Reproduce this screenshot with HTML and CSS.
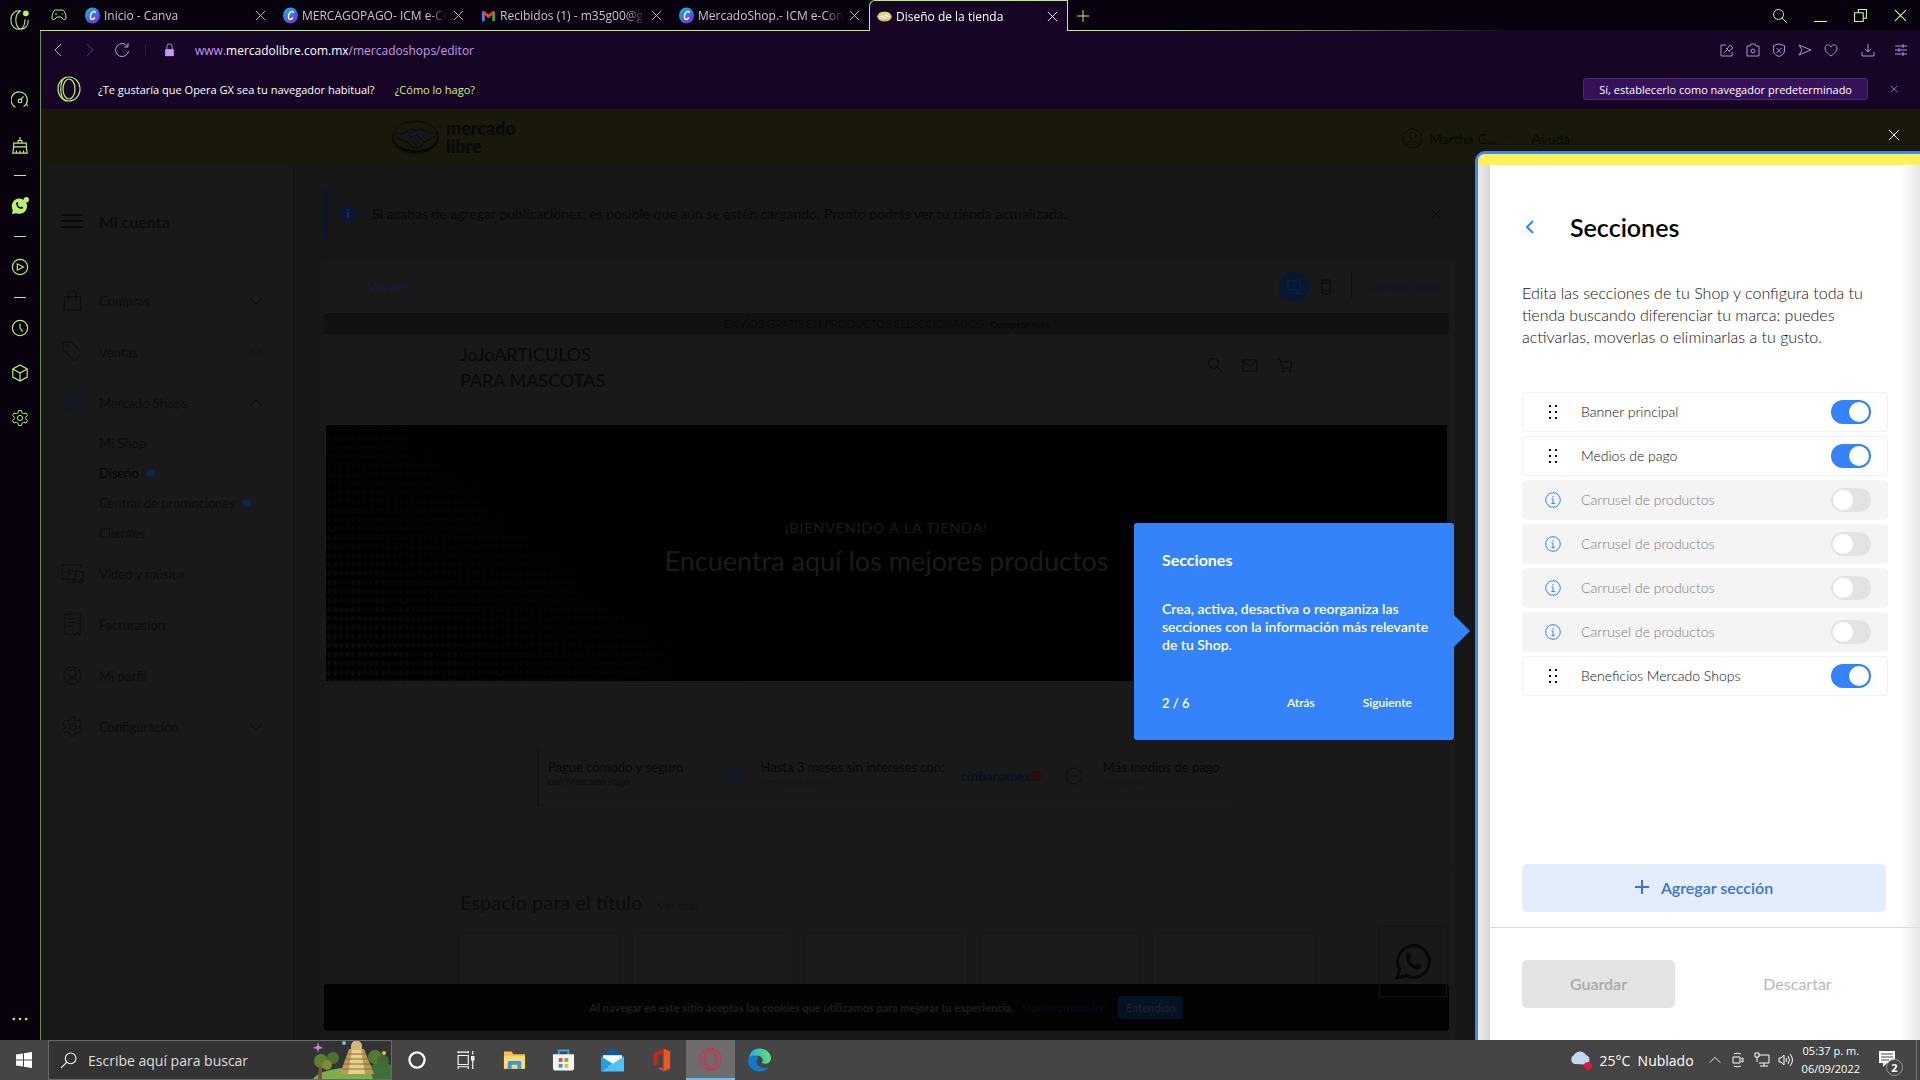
FILE: index.html
```html
<!DOCTYPE html>
<html lang="es">

<head>
    <meta charset="UTF-8">
    <meta name="viewport" content="width=device-width, initial-scale=1.0">
    <title>Diseño de la tienda</title>
    <link rel="stylesheet" href="styles.css">
</head>

<body>
    <!-- shared icons -->
    <svg class="sprite" aria-hidden="true">
        <symbol id="i-close" viewBox="0 0 12 12"><path d="M1 1l10 10M11 1L1 11"/></symbol>
        <symbol id="i-down" viewBox="0 0 16 16"><path d="M2 5l6 6 6-6"/></symbol>
        <symbol id="i-up" viewBox="0 0 16 16"><path d="M2 11l6-6 6 6"/></symbol>
        <symbol id="i-left" viewBox="0 0 16 16"><path d="M11 2L5 8l6 6"/></symbol>
        <symbol id="i-right" viewBox="0 0 16 16"><path d="M5 2l6 6-6 6"/></symbol>
        <symbol id="i-search" viewBox="0 0 16 16"><circle cx="6.500" cy="6.500" r="5"/><path d="M10 10l5 5"/></symbol>
        <symbol id="i-gear" viewBox="0 0 24 24"><circle cx="12" cy="12" r="3.500"/><path d="M10 2h4l.6 3 2.400 1.300 2.900-1 2 3.500L19.700 11v2l2.200 2.200-2 3.500-2.900-1-2.400 1.300-.6 3h-4l-.6-3L7 17.700l-2.900 1-2-3.500L4.300 13v-2L2.100 8.800l2-3.500 2.900 1L9.400 5z"/></symbol>
        <symbol id="i-info" viewBox="0 0 16 16"><circle cx="8" cy="8" r="7.300"/><path d="M6.500 7H8v4.500M6.300 11.500h3.500M8 4v1.500"/></symbol>
        <symbol id="i-grip" viewBox="0 0 8 14"><path d="M0 0h2v2H0zM6 0h2v2H6zM0 6h2v2H0zM6 6h2v2H6zM0 12h2v2H0zM6 12h2v2H6z"/></symbol>
        <symbol id="i-phone" viewBox="0 0 24 24"><path d="M2 22l1.500-5.500A10 10 0 1 1 7.500 20.500z"/><path class="solid" d="M7.500 7c1-1.500 2-1 2.300 0l.7 1.800c.2.600-.9 1.400-.6 1.900.8 1.500 1.900 2.500 3.400 3.200.6.300 1.300-1.200 1.900-.9l2 1c.7.500-.2 2.500-2 2.800C11.500 17.300 6.500 12 7.500 7z"/></symbol>
        <symbol id="i-canva" viewBox="0 0 16 18"><defs><linearGradient id="cv" x1="0" y1="0" x2=".7" y2="1"><stop offset="0" stop-color="#12c8cf"/><stop offset=".5" stop-color="#3a7be0"/><stop offset="1" stop-color="#7d2ae8"/></linearGradient></defs><ellipse cx="8" cy="9" rx="8" ry="8.500" fill="url(#cv)" stroke="none"/><path d="M10.800 6.500c.4-2-1.300-2.400-2.700-1.300-2.200 1.700-3 5.500-1.800 7.300 1 1.300 3 .6 4.300-1.500" stroke="#fff" stroke-width="1.500"/></symbol>
        <symbol id="i-hands" viewBox="0 0 50 34"><ellipse class="ring" cx="25" cy="18" rx="24" ry="16"/><ellipse class="plate" cx="25" cy="16" rx="23" ry="15"/><path class="hands" d="M3 13c7 2 10 0 15-3 3-1 5-1 7 0 4-2 7-1 10 1 4 2 7 3 12 1-1 5-6 7-11 9-3 4-7 8-12 7-4-1-6-5-9-7-5-1-10-3-12-8z"/><path d="M25 10l-7 5c2 3 5 2 8 0l10 8M31 25l-5-5M27 27l-4-4"/></symbol>
    </svg>

    <div class="desktop">
        <aside class="gx-bar">
            <div class="gx-logo">
                <svg viewBox="0 0 24 24"><path d="M13 1C6 0 1 5 1 12s5 12 11 11c6 0 10-4 10-11M13 1C9 3 7 7 7 12s2 9 5 11c4-1 6-5 6-12"/><circle class="solid" cx="19" cy="4" r="3.500"/></svg>
            </div>
            <button aria-label="Control GX"><svg viewBox="0 0 20 20"><path d="M5 18a9 9 0 1 1 9-.5M18 9v4M18 15v2"/><circle cx="10" cy="11" r="2"/><path d="M11 9l3-3"/></svg></button>
            <button aria-label="Limpiador"><svg viewBox="0 0 20 20"><path d="M3 8h14v4H3zM8 8V5h4v3M10 5V1M3 12l-1 7h16l-1-7M6 19v-3M10 19v-3M14 19v-3"/></svg></button>
            <span class="dash"></span>
            <button aria-label="WhatsApp"><svg viewBox="0 0 20 20"><path class="solid" d="M1 19l1-4.500A8.500 8.500 0 1 1 6 18z"/><circle class="solid" cx="17" cy="3" r="3"/><path class="hole" d="M6 6c1-1 1.500-.5 2 1 .3 1-.6 1-.3 1.800.6 1.300 1.400 2 2.600 2.500.8.300 1-.9 1.700-.6 1.500.6 2 1.200 1 2C10 14.500 4.500 10 6 6z"/></svg></button>
            <span class="dash"></span>
            <button aria-label="Reproductor"><svg viewBox="0 0 20 20"><circle cx="10" cy="10" r="8.500"/><path d="M7 6.500v7l7-3.500z"/></svg></button>
            <span class="dash"></span>
            <button aria-label="Historial"><svg viewBox="0 0 20 20"><circle cx="10" cy="10" r="8.500"/><path d="M10 5v5l3 4"/></svg></button>
            <button aria-label="Extensiones"><svg viewBox="0 0 20 20"><path d="M10 1l8 4.500v9L10 19l-8-4.500v-9zM2 5.500L10 10l8-4.500M10 10v9"/></svg></button>
            <button aria-label="Ajustes"><svg><use href="#i-gear"/></svg></button>
            <button class="more" aria-label="Más"><svg viewBox="0 0 18 4"><circle class="solid" cx="2" cy="2" r="1.500"/><circle class="solid" cx="9" cy="2" r="1.500"/><circle class="solid" cx="16" cy="2" r="1.500"/></svg></button>
        </aside>

        <div class="browser">
            <div class="tabs">
                <span class="gamepad"><svg viewBox="0 0 16 14"><path d="M4 2h8c2 1 3 5 3 8 0 2-2 2-3 1l-2-2H6l-2 2c-1 1-3 1-3-1 0-3 1-7 3-8z"/><path d="M4 6h2M11 6h1"/></svg></span>
                <div class="tab"><svg><use href="#i-canva"/></svg><span>Inicio - Canva</span><button aria-label="Cerrar"><svg><use href="#i-close"/></svg></button></div>
                <div class="tab"><svg><use href="#i-canva"/></svg><span>MERCAGOPAGO- ICM e-Commerce</span><button aria-label="Cerrar"><svg><use href="#i-close"/></svg></button></div>
                <div class="tab"><svg viewBox="0 0 16 18"><path d="M1 4v11h3V7z" fill="#4285f4" stroke="none"/><path d="M15 4v11h-3V7z" fill="#34a853" stroke="none"/><path d="M2 5l6 5 6-5" stroke="#ea4335" stroke-width="3"/></svg><span>Recibidos (1) - m35g00@gmail.com</span><button aria-label="Cerrar"><svg><use href="#i-close"/></svg></button></div>
                <div class="tab"><svg><use href="#i-canva"/></svg><span>MercadoShop.- ICM e-Commerce</span><button aria-label="Cerrar"><svg><use href="#i-close"/></svg></button></div>
                <div class="tab active"><svg class="ml-icon"><use href="#i-hands"/></svg><span>Diseño de la tienda</span><button aria-label="Cerrar"><svg><use href="#i-close"/></svg></button></div>
                <button class="new-tab" aria-label="Nueva pestaña"><svg viewBox="0 0 12 12"><path d="M6 0v12M0 6h12"/></svg></button>
                <div class="window-buttons">
                    <button aria-label="Buscar"><svg class="find"><use href="#i-search"/></svg></button>
                    <button aria-label="Minimizar"><svg viewBox="0 0 12 12"><path d="M0 11.500h12"/></svg></button>
                    <button aria-label="Restaurar"><svg viewBox="0 0 12 12"><path d="M.5 3.500h8v8h-8zM4 3.500v-3h7.500v8H8.500"/></svg></button>
                    <button aria-label="Cerrar ventana"><svg><use href="#i-close"/></svg></button>
                </div>
            </div>

            <div class="address">
                <button aria-label="Atrás"><svg><use href="#i-left"/></svg></button>
                <button class="off" aria-label="Adelante"><svg><use href="#i-right"/></svg></button>
                <button aria-label="Recargar"><svg viewBox="0 0 16 16"><path d="M13.500 4.500A6.500 6.500 0 1 0 14.500 9M14 1v4h-4"/></svg></button>
                <span class="sep"></span>
                <svg class="lock" viewBox="0 0 12 16"><path class="solid" d="M1 7h10v8H1z"/><path d="M3 7V4a3 3 0 0 1 6 0v3"/></svg>
                <div class="url">www.<b>mercadolibre.com.mx</b>/mercadoshops/editor</div>
                <div class="tools">
                    <button aria-label="Fijar"><svg viewBox="0 0 14 14"><path d="M6 2H1v11h11V9M4 10l3-3M6 5l4 4M7 6l3-4 3 3-4 3"/></svg></button>
                    <button aria-label="Captura"><svg viewBox="0 0 14 14"><path d="M1 3h3l1-2h4l1 2h3v10H1z"/><circle cx="7" cy="8" r="2"/></svg></button>
                    <button aria-label="Bloqueador"><svg viewBox="0 0 14 14"><path d="M7 1l5.500 1.500V8c0 3-3 4.500-5.500 5.500C4.500 12.500 1.500 11 1.500 8V2.500zM4.500 5l5 5M9.500 5l-5 5"/></svg></button>
                    <button aria-label="Enviar"><svg viewBox="0 0 14 14"><path d="M1 2l12 5-12 5 3-5z"/></svg></button>
                    <button class="heart" aria-label="Favoritos"><svg viewBox="0 0 14 14"><path d="M7 13C3 10 1 8 1 5c0-4 5-4 6-1 1-3 6-3 6 1 0 3-2 5-6 8z"/></svg></button>
                    <button class="wide" aria-label="Descargas"><svg viewBox="0 0 14 14"><path d="M7 1v8M4 6l3 3 3-3M1 9v4h12V9"/></svg></button>
                    <button class="wide" aria-label="Configuración rápida"><svg viewBox="0 0 14 14"><path d="M1 3h12M1 7h12M1 11h12M9 1v4M5 5v4M9 9v4"/></svg></button>
                </div>
            </div>

            <div class="ask">
                <svg class="opera" viewBox="0 0 24 26"><ellipse cx="12" cy="13" rx="11" ry="12"/><ellipse cx="12" cy="13" rx="6" ry="10"/><path d="M9 1c-7 3-7 21 0 24"/></svg>
                <span>¿Te gustaría que Opera GX sea tu navegador habitual?</span>
                <a href="#">¿Cómo lo hago?</a>
                <button class="default-btn">Sí, establecerlo como navegador predeterminado</button>
                <button class="ask-close" aria-label="Cerrar aviso"><svg><use href="#i-close"/></svg></button>
            </div>

            <div class="site">
                <header class="site-header">
                    <a class="logo" href="#"><svg><use href="#i-hands"/></svg><span>mercado<br>libre</span></a>
                    <div class="account">
                        <svg class="avatar" viewBox="0 0 22 22"><circle cx="11" cy="11" r="10"/><circle cx="11" cy="8" r="3.500"/><path d="M4 18c2-5 12-5 14 0"/></svg>
                        <a href="#">Martha G...</a>
                        <svg class="tiny"><use href="#i-down"/></svg>
                        <a class="help" href="#">Ayuda</a>
                    </div>
                    <button class="tour-close" aria-label="Cerrar recorrido"><svg><use href="#i-close"/></svg></button>
                </header>

                <div class="site-body">
                    <nav class="menu">
                        <div class="menu-title"><svg viewBox="0 0 22 14"><path d="M0 1h22M0 7h22M0 13h22"/></svg>Mi cuenta</div>
                        <a href="#"><svg viewBox="0 0 24 24"><path d="M4 8h16l1 14H3zM8 11V6a4 4 0 0 1 8 0v5"/></svg>Compras<svg class="arrow"><use href="#i-down"/></svg></a>
                        <a href="#"><svg viewBox="0 0 24 24"><path d="M2 2h9l11 12-8 8L2 10z"/><circle cx="6" cy="6" r="1"/></svg>Ventas<svg class="arrow"><use href="#i-down"/></svg></a>
                        <a href="#" class="shops"><svg viewBox="0 0 24 24"><path d="M4 2h16l2 7c0 4-5 4-5 1 0 3-5 3-5 0 0 3-5 3-5 0 0 3-5 3-5-1zM4 12v10h5v-6h6v6h5V12"/></svg>Mercado Shops<svg class="arrow"><use href="#i-up"/></svg></a>
                        <div class="submenu">
                            <a href="#">Mi Shop</a>
                            <a href="#" class="current">Diseño<i></i></a>
                            <a href="#">Central de promociones<i></i></a>
                            <a href="#">Clientes</a>
                        </div>
                        <a href="#"><svg viewBox="0 0 24 24"><path d="M14 18H1V3h20v4M8 7l5 3-5 3zM15 20V10h8v10M5 21h8"/><circle cx="14" cy="20" r="2"/><circle cx="21" cy="20" r="2"/></svg>Video y música</a>
                        <a href="#"><svg viewBox="0 0 24 24"><path d="M4 1h16v22l-3-2-3 2-2-2-3 2-2-2-3 2zM8 6h8M8 10h8M8 14h4"/></svg>Facturación</a>
                        <a href="#"><svg viewBox="0 0 24 24"><circle cx="12" cy="12" r="9"/><circle cx="12" cy="10" r="4"/><path d="M6 19c2-5 10-5 12 0"/></svg>Mi perfil</a>
                        <a href="#"><svg><use href="#i-gear"/></svg>Configuración<svg class="arrow"><use href="#i-down"/></svg></a>
                    </nav>

                    <main class="editor">
                        <div class="notice">
                            <span class="notice-icon">i</span>
                            <p>Si acabas de agregar publicaciones, es posible que aún se estén cargando. Pronto podrás ver tu tienda actualizada.</p>
                            <button aria-label="Cerrar mensaje"><svg><use href="#i-close"/></svg></button>
                        </div>

                        <div class="frame">
                            <div class="frame-bar">
                                <a class="back" href="#"><svg><use href="#i-left"/></svg>Volver</a>
                                <button class="desk" aria-label="Escritorio"><svg viewBox="0 0 16 14"><path d="M2 1h12v9H2zM0 13h16"/></svg></button>
                                <button class="mobile" aria-label="Móvil"><svg viewBox="0 0 10 16"><path d="M1 1h8v14H1zM1 4h8M1 12h8"/></svg></button>
                                <a class="see" href="#">Ver mi Shop</a>
                            </div>

                            <div class="preview">
                                <div class="promo">ENVÍOS GRATIS EN PRODUCTOS SELECCIONADOS <a href="#">Comprar más</a></div>
                                <div class="store-head">
                                    <h2>JoJoARTICULOS<br>PARA MASCOTAS</h2>
                                    <div class="store-icons">
                                        <svg><use href="#i-search"/></svg>
                                        <svg viewBox="0 0 16 16"><path d="M1 3h14v11H1zM1 4l7 5 7-5"/></svg>
                                        <svg viewBox="0 0 16 16"><path d="M0 2h3l2 9h9l1-6H4"/><circle cx="6" cy="14" r="1"/><circle cx="13" cy="14" r="1"/></svg>
                                    </div>
                                </div>
                                <div class="banner">
                                    <p>¡BIENVENIDO A LA TIENDA!</p>
                                    <h1>Encuentra aquí los mejores productos</h1>
                                </div>
                                <div class="payments">
                                    <div class="pay">Pague cómodo y seguro<small>con Mercado Pago</small></div>
                                    <svg class="card-icon" viewBox="0 0 18 14"><path d="M1 1h16v12H1zM1 5h16M1 7h16"/></svg>
                                    <div class="pay">Hasta 3 meses sin intereses con:<small class="faint">Ver condiciones</small></div>
                                    <strong>citibanamex<i></i></strong>
                                    <svg class="plus-icon" viewBox="0 0 18 18"><circle cx="9" cy="9" r="8"/><path d="M9 5v8M5 9h8"/></svg>
                                    <div class="pay">Más medios de pago<small class="faint">Ver todos</small></div>
                                </div>
                                <section class="products">
                                    <h3>Espacio para el título <a href="#">Ver más</a></h3>
                                    <div class="cards"><div></div><div></div><div></div><div></div><div></div></div>
                                </section>
                                <div class="cookies">
                                    <span>Al navegar en este sitio aceptas las cookies que utilizamos para mejorar tu experiencia.</span>
                                    <a href="#">Más información</a>
                                    <button>Entendido</button>
                                </div>
                                <a class="chat" href="#" aria-label="WhatsApp"><svg><use href="#i-phone"/></svg></a>
                            </div>
                        </div>
                    </main>

                    <aside class="panel">
                        <div class="panel-yellow"></div>
                        <div class="panel-body">
                            <div class="panel-title">
                                <button aria-label="Volver"><svg><use href="#i-left"/></svg></button>
                                <h2>Secciones</h2>
                            </div>
                            <p class="intro">Edita las secciones de tu Shop y configura toda tu tienda buscando diferenciar tu marca: puedes activarlas, moverlas o eliminarlas a tu gusto.</p>
                            <div class="sections">
                                <label class="row"><svg class="grip"><use href="#i-grip"/></svg><span>Banner principal</span><input type="checkbox" checked></label>
                                <label class="row"><svg class="grip"><use href="#i-grip"/></svg><span>Medios de pago</span><input type="checkbox" checked></label>
                                <label class="row off"><svg class="info"><use href="#i-info"/></svg><span>Carrusel de productos</span><input type="checkbox" disabled></label>
                                <label class="row off"><svg class="info"><use href="#i-info"/></svg><span>Carrusel de productos</span><input type="checkbox" disabled></label>
                                <label class="row off"><svg class="info"><use href="#i-info"/></svg><span>Carrusel de productos</span><input type="checkbox" disabled></label>
                                <label class="row off"><svg class="info"><use href="#i-info"/></svg><span>Carrusel de productos</span><input type="checkbox" disabled></label>
                                <label class="row"><svg class="grip"><use href="#i-grip"/></svg><span>Beneficios Mercado Shops</span><input type="checkbox" checked></label>
                            </div>
                            <button class="add"><svg viewBox="0 0 14 14"><path d="M7 0v14M0 7h14"/></svg>Agregar sección</button>
                            <div class="panel-footer">
                                <button class="save" disabled>Guardar</button>
                                <button class="discard" disabled>Descartar</button>
                            </div>
                        </div>

                        <!-- onboarding tooltip -->
                        <div class="tour">
                            <h4>Secciones</h4>
                            <p>Crea, activa, desactiva o reorganiza las secciones con la información más relevante de tu Shop.</p>
                            <div class="tour-nav"><span>2 / 6</span><button>Atrás</button><button>Siguiente</button></div>
                        </div>
                    </aside>
                </div>
            </div>
        </div>
    </div>

    <footer class="taskbar">
        <button class="start" aria-label="Inicio"><svg viewBox="0 0 16 16"><path class="solid" d="M0 2.500L7 1.500v6H0zM8 1.300L16 0v7.500H8zM0 8.500h7v6l-7-1zM8 8.500h8V16l-8-1.300z"/></svg></button>
        <div class="search">
            <svg class="lens" viewBox="0 0 16 16"><circle cx="10" cy="6" r="5"/><path d="M6.500 9.500L1 15"/></svg>
            <input type="text" placeholder="Escribe aquí para buscar" aria-label="Buscar">
            <svg class="temple" viewBox="0 0 78 38">
                <path d="M0 38c10-14 60-16 78-2v2z" fill="#7cae4a"/>
                <path d="M56 26l10-6 12 4v14H60z" fill="#3f6f38"/>
                <path d="M5 38l1-14 3 0v14z" fill="#7a5530"/>
                <circle cx="8" cy="20" r="7" fill="#5f7f2e"/><circle cx="20" cy="17" r="6" fill="#4c7030"/><circle cx="14" cy="24" r="5" fill="#7a8f38"/><circle cx="62" cy="16" r="7" fill="#547a34"/><circle cx="70" cy="20" r="6" fill="#3f6a34"/>
                <path d="M36 8h15l10 25H27z" fill="#b99a56"/><path d="M39 8h9l4 25H35z" fill="#e6cf90"/>
                <path d="M35 13h18M33 18h22M31 23h26M29 28h30" stroke="#8a6d38"/>
                <path d="M38 5a5 5 0 0 1 11 0v4H38z" fill="#d2b878"/>
                <path d="M5 1l1 4 4 2-4 1-1 4-1-4-4-1 4-2z" fill="#d77bea"/><circle cx="31" cy="2" r="2" fill="#59cfcf"/><circle cx="71" cy="12" r="2" fill="#f2c230"/>
            </svg>
        </div>
        <button aria-label="Cortana"><svg class="t16" viewBox="0 0 16 16"><circle cx="8" cy="8" r="6.700" stroke-width="2"/></svg></button>
        <button aria-label="Vista de tareas"><svg class="t16" viewBox="0 0 16 16"><path d="M1 4h9v8H1zM1 2V0M10 2V0M1 16v-2h9v2M1 1h9M14 0v3M14 6v10M13 5h2v3h-2z"/></svg></button>
        <button aria-label="Explorador"><svg viewBox="0 0 24 24"><path d="M1 3h8l2 3h12v15H1z" fill="#f5c344" stroke="none"/><path d="M1 8h22v13H1z" fill="#ffdc73" stroke="none"/><path d="M5 21v-6c0-2 1-2 2-2h10c1 0 2 0 2 2v6h-4v-4H9v4z" fill="#3a96dd" stroke="none"/></svg></button>
        <button aria-label="Tienda"><svg viewBox="0 0 24 24"><path d="M7 6V2h10v4" stroke="#35a8e0" stroke-width="2"/><path d="M1 6h22v14q0 3-3 3H4q-3 0-3-3z" fill="#f4f4f4" stroke="none"/><path d="M7 10h4v4H7z" fill="#e8482c" stroke="none"/><path d="M13 10h4v4h-4z" fill="#7bb32e" stroke="none"/><path d="M7 16h4v4H7z" fill="#2795d8" stroke="none"/><path d="M13 16h4v4h-4z" fill="#f4b41a" stroke="none"/></svg></button>
        <button aria-label="Correo"><svg viewBox="0 0 24 24"><path d="M0 8l12-8 12 8v16H0z" fill="#0a5aa8" stroke="none"/><path d="M2 7h20v12H2z" fill="#fff" stroke="none"/><path d="M0 8l12 8L0 24z" fill="#1f9fe8" stroke="none"/><path d="M24 8v16H0z" fill="#4cc2f5" stroke="none"/></svg></button>
        <button aria-label="Office"><svg viewBox="0 0 24 24"><path d="M14 0l7 3v18l-7 3z" fill="#f0561d" stroke="none"/><path d="M14 0L4 5v13l4-2V7l6-2z" fill="#c4281b" stroke="none"/><path d="M5 18l9 6v-4H8z" fill="#e23a55" stroke="none"/></svg></button>
        <button class="running" aria-label="Opera GX"><svg viewBox="0 0 24 24"><g stroke="#e0264f"><ellipse cx="12" cy="12" rx="11" ry="11.500"/><ellipse cx="12" cy="12" rx="7" ry="10.500"/><ellipse cx="12" cy="12" rx="5" ry="8.500"/></g></svg></button>
        <button aria-label="Edge"><svg viewBox="0 0 24 24"><defs><linearGradient id="eg" x1="0" x2="1"><stop offset="0" stop-color="#2aa7e8"/><stop offset="1" stop-color="#5fe36c"/></linearGradient></defs><path d="M1 10C2 3 7 0 12 0c7 0 12 5 12 10 0 4-3 6-6 6-3 0-4-1-3-2 2-4-3-8-8-6-3 1-5 2-6 2z" fill="url(#eg)" stroke="none"/><path d="M0 12C1 7 7 6 11 9c-4 3-2 10 4 11 3 1 5 0 7-1-3 4-7 5-10 5C5 24 0 19 0 12z" fill="#1378cc" stroke="none"/></svg></button>
        <div class="tray">
            <svg class="cloud" viewBox="0 0 24 20"><path d="M6 14a5 5 0 0 1 0-9 7 7 0 0 1 12 0 5 5 0 0 1 0 9.500z" fill="#c5d8f2" stroke="none"/><circle cx="20" cy="16" r="4" fill="#e3173e" stroke="none"/></svg>
            <span class="weather">25°C &nbsp;Nublado</span>
            <svg class="t12"><use href="#i-up"/></svg>
            <svg class="t16" viewBox="0 0 16 16"><path d="M3 5h7v6H3zM11 7l2-1v4l-2-1M4 2c2-1 5-1 7 0M4 14c2 1 5 1 7 0"/></svg>
            <svg class="t16" viewBox="0 0 16 16"><path d="M5 3h10v8H5M10 11v3M6 14h8M1 1h4v4H1zM3 5v5"/></svg>
            <svg class="t16" viewBox="0 0 16 16"><path d="M1 6v4h2l3 3V3L3 6zM8 6q1 2 0 4M10 4q3 4 0 8M12 2q5 6 0 12"/></svg>
            <time>05:37 p. m.<br>06/09/2022</time>
            <div class="alerts"><svg viewBox="0 0 16 16"><path class="solid" d="M0 0h16v12H8l-4 4v-4H0z"/><path class="lines" d="M2 3h12M2 6h12M2 9h8"/></svg><b>2</b></div>
        </div>
    </footer>
</body>

</html>
```
FILE: styles.css
```css
* {
    margin: 0;
    padding: 0;
    box-sizing: border-box;
}

body {
    min-height: 100vh;
    display: flex;
    flex-direction: column;
    background-color: #191919;
    font-family: "Open Sans", "Noto Sans", sans-serif;
    font-size: 12px;
}

button {
    background: none;
    border: none;
    color: inherit;
    font: inherit;
    display: flex;
    align-items: center;
    justify-content: center;
}

a {
    color: inherit;
    text-decoration: none;
}

svg {
    flex: none;
    fill: none;
    stroke: currentColor;
}

.solid {
    fill: currentColor;
    stroke: none;
}

.sprite {
    position: absolute;
    width: 0;
    height: 0;
}

.desktop {
    flex: 1;
    display: flex;
}

/* Opera GX side bar */
.gx-bar {
    width: 40px;
    background-color: #08020f;
    color: #bdf06c;
    display: flex;
    flex-direction: column;
    align-items: center;
}

.gx-bar svg {
    width: 18px;
    height: 18px;
    stroke-width: 1.3;
}

.gx-bar button {
    width: 40px;
    height: 45px;
}

.gx-logo {
    height: 77px;
    padding-top: 9px;
}

.gx-bar .gx-logo svg {
    width: 20px;
    height: 22px;
}

.dash {
    width: 12px;
    height: 16px;
    background: linear-gradient(#bdf06c, #bdf06c) center / 100% 1px no-repeat;
}

.hole {
    fill: #08020f;
    stroke: none;
}

.gx-bar .more {
    margin-top: auto;
    height: 42px;
}

.gx-bar .more svg {
    width: 16px;
    height: 4px;
}

/* Browser chrome */
.browser {
    flex: 1;
    min-width: 0;
    display: flex;
    flex-direction: column;
    border-left: 1px solid #6f9044;
    background-color: #160524;
}

.tabs {
    height: 31px;
    display: flex;
    margin-left: -1px;
    background-color: #08020f;
    background-image: linear-gradient(90deg, #bdf06c 60%, #160524 78%);
    background-size: 100% 1px;
    background-position: bottom;
    background-repeat: no-repeat;
    color: #c9c4ce;
}

.gamepad {
    width: 37px;
    padding: 8px 0 0 11px;
    color: #bdf06c;
}

.gamepad svg {
    width: 16px;
    height: 14px;
}

.tab {
    width: 199px;
    display: flex;
    align-items: center;
    gap: 4px;
    padding-left: 8px;
    padding-right: 10px;
    margin-right: -1px;
}

.tab > svg {
    width: 15px;
    height: 17px;
}

.tab span {
    flex: 1;
    min-width: 0;
    overflow: hidden;
    white-space: nowrap;
    -webkit-mask-image: linear-gradient(90deg, #000 86%, transparent);
    mask-image: linear-gradient(90deg, #000 86%, transparent);
}

.tab button {
    width: 12px;
    height: 12px;
}

.tab button svg {
    width: 11px;
    height: 11px;
}

.tab.active {
    background-color: #160524;
    border: 1px solid #bdf06c;
    border-bottom: none;
    border-top-left-radius: 6px;
    color: #fff;
    padding-left: 7px;
    padding-right: 9px;
}

.ml-icon {
    color: #77712d;
}

.ml-icon,
.site-header {
    --ring: #e0c92e;
    --plate: #efe07a;
    --hands: #f4f4f4;
}

.ring {
    fill: var(--ring);
    stroke: none;
}

.plate {
    fill: var(--plate);
}

.hands {
    fill: var(--hands);
}

.new-tab {
    width: 32px;
    color: #bdf06c;
}

.new-tab svg {
    width: 12px;
    height: 12px;
}

.window-buttons {
    margin-left: auto;
    display: flex;
    color: #d4f59a;
}

.window-buttons button {
    width: 40px;
}

.window-buttons svg {
    width: 13px;
    height: 13px;
}

.window-buttons .find {
    width: 16px;
    height: 16px;
}

.address {
    height: 38px;
    display: flex;
    align-items: center;
    color: #c59af0;
    padding-left: 1px;
}

.address button {
    width: 32px;
    height: 32px;
}

.address svg {
    width: 14px;
    height: 14px;
}

.address > button svg {
    width: 16px;
    height: 16px;
}

.address .off {
    color: #563a6e;
}

.sep {
    width: 1px;
    height: 12px;
    margin: 0 18px 0 7px;
    background-color: #34194d;
}

.address .lock {
    width: 11px;
    margin-right: 20px;
}

.url {
    font-size: 12px;
}

.url b {
    font-weight: 400;
    color: #fff;
}

.tools {
    margin-left: auto;
    display: flex;
    padding-right: 3px;
    color: #b48fd8;
}

.address .tools button {
    width: 26px;
}

.address .tools .heart {
    margin-right: 7px;
}

.address .tools .wide {
    width: 33px;
}

.ask {
    height: 40px;
    display: flex;
    align-items: center;
    padding: 0 20px 0 16px;
    color: #fff;
    font-size: 11px;
}

.opera {
    width: 24px;
    height: 26px;
    margin-right: 17px;
    color: #bdf06c;
    stroke-width: 1.2;
}

.ask a {
    margin-left: 20px;
    color: #d0f090;
}

.default-btn {
    margin-left: auto;
    height: 22px;
    padding: 0 15px;
    border: 1px solid #4c2678;
    border-radius: 3px;
    background-color: #351158;
}

.ask-close {
    width: 12px;
    margin-left: 20px;
    color: #c59af0;
}

.ask-close svg {
    width: 8px;
    height: 8px;
}

/* Mercado Libre page, dimmed while the tour is open */
.site {
    flex: 1;
    display: flex;
    flex-direction: column;
    background-color: #171717;
    color: #080808;
    font-family: Lato, "Open Sans", sans-serif;
    font-size: 14px;
}

.site-header {
    --ring: #090907;
    --plate: #1a180a;
    --hands: #17171a;
    height: 56px;
    display: flex;
    align-items: center;
    padding: 0 18px 0 350px;
    background-color: #1a180a;
    color: #090907;
}

.logo {
    display: flex;
    align-items: center;
    gap: 6px;
    font-size: 18px;
    font-weight: 900;
    line-height: 18px;
}

.logo svg {
    width: 49px;
    height: 34px;
}

.account {
    display: flex;
    align-items: center;
    gap: 6px;
    margin-left: auto;
    margin-right: 316px;
    padding-top: 2px;
    font-size: 14px;
}

.avatar {
    width: 21px;
    height: 21px;
}

.tiny {
    width: 8px;
    height: 8px;
}

.help {
    margin-left: 14px;
}

.tour-close {
    width: 16px;
    padding-bottom: 4px;
    color: #fff;
}

.tour-close svg {
    width: 12px;
    height: 12px;
}

.site-body {
    flex: 1;
    display: flex;
}

.menu {
    width: 253px;
    padding: 35px 29px 0 20px;
    border-right: 1px solid #131313;
    background-color: #191919;
    font-size: 13px;
}

.menu-title {
    height: 42px;
    margin-bottom: 33px;
    display: flex;
    align-items: center;
    gap: 16px;
    font-size: 16px;
    font-weight: 600;
    color: #0b0b0b;
}

.menu-title svg {
    width: 22px;
    height: 14px;
    stroke-width: 2;
}

.menu > a {
    height: 51px;
    display: flex;
    align-items: center;
    gap: 15px;
    color: #0c0c0c;
}

.menu > a > svg {
    width: 23px;
    height: 23px;
}

.menu > a > .arrow {
    width: 16px;
    height: 16px;
    margin-left: auto;
}

.menu .shops svg:first-child {
    color: #0b1a30;
    stroke-width: 2;
}

.submenu {
    padding-left: 38px;
}

.submenu a {
    height: 30px;
    display: flex;
    align-items: center;
    gap: 8px;
    color: #0c0c0c;
}

.submenu .current {
    color: #030303;
}

.submenu i {
    width: 8px;
    height: 8px;
    border-radius: 50%;
    background-color: #06284a;
}

.editor {
    flex: 1;
    min-width: 0;
    padding: 25px 20px 0 30px;
    display: flex;
    flex-direction: column;
}

.notice {
    height: 49px;
    display: flex;
    align-items: center;
    margin-bottom: 21px;
    padding: 0 12px 2px;
    border-left: 4px solid #0a1238;
    border-radius: 3px;
    background-color: #161616;
}

.notice-icon {
    width: 16px;
    height: 16px;
    margin-right: 16px;
    border-radius: 50%;
    background-color: #08183a;
    color: #26364a;
    font-size: 12px;
    font-weight: 700;
    line-height: 16px;
    text-align: center;
}

.notice button {
    width: 14px;
    margin-left: auto;
}

.notice button svg {
    width: 12px;
    height: 12px;
}

.frame {
    flex: 1;
    display: flex;
    flex-direction: column;
    background-color: #191919;
}

.frame-bar {
    height: 53px;
    display: flex;
    align-items: center;
    padding: 0 12px 0 22px;
}

.back {
    display: flex;
    align-items: center;
    gap: 10px;
    margin-right: auto;
    color: #121a44;
    font-size: 14px;
}

.back svg {
    width: 12px;
    height: 12px;
}

.desk {
    width: 30px;
    height: 30px;
    border-radius: 50%;
    background-color: #06182f;
    color: #0b2340;
}

.desk svg {
    width: 16px;
    height: 14px;
}

.mobile {
    width: 34px;
    height: 30px;
    margin-right: 8px;
}

.mobile svg {
    width: 10px;
    height: 16px;
}

.see {
    padding: 6px 0 6px 17px;
    border-left: 1px solid #111;
    color: #10152c;
}

.preview {
    position: relative;
    flex: 1;
    margin-right: 6px;
    margin-bottom: 9px;
    display: flex;
    flex-direction: column;
}

.promo {
    height: 21px;
    line-height: 21px;
    background-color: #111;
    color: #090909;
    font-size: 11px;
    text-align: center;
}

.promo a {
    margin-left: 4px;
    color: #070707;
    font-size: 10px;
    font-weight: 700;
}

.store-head {
    height: 91px;
    display: flex;
    justify-content: space-between;
    padding: 7px 156px 0 136px;
}

.store-head h2 {
    font-size: 18px;
    font-weight: 400;
    line-height: 26px;
}

.store-icons {
    display: flex;
    gap: 19px;
    padding-top: 16px;
}

.store-icons svg {
    width: 16px;
    height: 16px;
}

.banner {
    height: 256px;
    margin: 0 2px;
    padding-top: 92px;
    background-color: #010101;
    background-image: linear-gradient(40deg, rgba(1, 1, 1, 0.2) 0%, #010101 30%), radial-gradient(ellipse 3px 4px, #0e0e0e 40%, #010101 100%);
    background-size: 100% 100%, 6px 9px;
    color: #1b1b1b;
    text-align: center;
}

.banner p {
    font-size: 14px;
    line-height: 22px;
    letter-spacing: 1px;
}

.banner h1 {
    font-size: 27px;
    font-weight: 400;
    line-height: 44px;
}

.payments {
    height: 60px;
    margin: 65px 212px 62px 213px;
    padding-left: 9px;
    border-left: 2px solid #131313;
    border-bottom: 1px solid #161616;
    display: flex;
    align-items: center;
    justify-content: flex-start;
}

.pay {
    padding-bottom: 6px;
    font-size: 13px;
    line-height: 16px;
}

.pay small {
    display: block;
    font-size: 10px;
    line-height: 12px;
    color: #0d0d0d;
}

.pay .faint {
    color: #151515;
}

.card-icon {
    width: 18px;
    height: 14px;
    margin: 0 19px 0 40px;
    color: #0b1c40;
}

.payments strong {
    margin-left: 16px;
    display: flex;
    align-items: center;
    font-size: 13px;
    color: #06101f;
}

.payments strong i {
    width: 10px;
    height: 10px;
    border-radius: 4px;
    background-color: #2a0a0c;
}

.plus-icon {
    width: 18px;
    height: 18px;
    margin: 0 20px 0 24px;
    color: #0c0f1a;
}

.products {
    flex: 1;
    padding: 16px 134px 0;
    border-top: 1px solid #151515;
    display: flex;
    flex-direction: column;
}

.products h3 {
    height: 34px;
    margin-bottom: 14px;
    padding-left: 2px;
    color: #0b0b0b;
    font-size: 20px;
    font-weight: 400;
    line-height: 34px;
}

.products h3 a {
    margin-left: 10px;
    color: #131313;
    font-size: 12px;
}

.cards {
    flex: 1;
    display: grid;
    grid-template-columns: repeat(5, 1fr);
    gap: 11px;
}

.cards div {
    border-radius: 4px 4px 0 0;
    border: 1px solid #161616;
    border-bottom: none;
    background-color: #1a1a1a;
}

.cookies {
    height: 47px;
    display: flex;
    align-items: center;
    justify-content: center;
    gap: 8px;
    border-radius: 3px;
    background-color: #030303;
    color: #1c1c1c;
    font-size: 11px;
    font-weight: 900;
}

.cookies a {
    color: #070b1c;
    font-weight: 400;
}

.cookies button {
    height: 23px;
    padding: 0 8px;
    margin-left: 8px;
    border-radius: 4px;
    background-color: #051224;
    color: #1b2430;
    font-weight: 400;
}

.chat {
    position: absolute;
    right: 2px;
    bottom: 34px;
    width: 68px;
    height: 71px;
    display: flex;
    align-items: center;
    justify-content: center;
    border: 1px solid #141414;
}

.chat svg {
    width: 38px;
    height: 38px;
    stroke-width: 2;
}

/* Sections panel */
.panel {
    position: relative;
    width: 445px;
    margin-top: -14px;
    display: flex;
    flex-direction: column;
    border: 3px solid #4285ee;
    border-width: 3px 0 0 3px;
    border-top-left-radius: 10px;
    background: linear-gradient(90deg, #ebebeb, #d8d8d8 12px);
    color: #111;
}

.panel-yellow {
    height: 11px;
    border-top-left-radius: 7px;
    background-color: #fff159;
}

.panel-body {
    flex: 1;
    display: flex;
    flex-direction: column;
    margin-left: 12px;
    padding: 41px 0 0 32px;
    background: linear-gradient(270deg, #e8e8e8, #fff 20px);
}

.panel-title {
    display: flex;
    align-items: center;
    gap: 33px;
    height: 42px;
    margin-bottom: 34px;
}

.panel-title button {
    width: 15px;
    color: #3483fa;
}

.panel-title svg {
    width: 16px;
    height: 16px;
    stroke-width: 2;
}

.panel-title h2 {
    font-size: 25px;
    font-weight: 600;
    color: #000;
}

.intro {
    margin-right: 34px;
    padding-right: 8px;
    font-size: 16px;
    font-weight: 300;
    line-height: 22px;
    height: 110px;
}

.sections {
    display: flex;
    flex-direction: column;
    gap: 4px;
    margin-right: 32px;
}

.row {
    height: 40px;
    display: flex;
    align-items: center;
    padding: 0 16px 0 22px;
    border: 1px solid #f2f2f2;
    border-radius: 4px;
    font-size: 14px;
    font-weight: 300;
}

.row.off {
    border-color: #f4f4f4;
    background-color: #f4f4f4;
    color: #7c7c7c;
}

.row span {
    flex: 1;
    padding-bottom: 2px;
}

.grip {
    width: 8px;
    height: 14px;
    margin: 0 24px 0 4px;
    fill: #111;
    stroke: none;
}

.info {
    width: 16px;
    height: 16px;
    margin-right: 20px;
    color: #3483fa;
}

.row input {
    appearance: none;
    width: 40px;
    height: 24px;
    padding: 2px;
    border-radius: 12px;
    background-color: #e3e3e3;
}

.row input::before {
    content: "";
    display: block;
    width: 20px;
    height: 20px;
    border-radius: 50%;
    background-color: #fff;
}

.row input:checked {
    background-color: #3483fa;
}

.row input:checked::before {
    margin-left: 16px;
}

.add {
    height: 48px;
    margin: auto 34px 15px 0;
    padding-bottom: 2px;
    gap: 12px;
    border-radius: 5px;
    background-color: #e3edfb;
    color: #3a72d8;
    font-size: 16px;
    font-weight: 600;
}

.add svg {
    width: 14px;
    height: 14px;
    stroke-width: 2;
}

.panel-footer {
    height: 113px;
    display: flex;
    padding: 32px 34px 0 32px;
    margin-left: -32px;
    border-top: 1px solid #dcdcdc;
    font-size: 16px;
    font-weight: 600;
}

.save,
.discard {
    width: 153px;
    height: 48px;
    padding-bottom: 2px;
    border-radius: 5px;
    color: #aaa;
}

.save {
    background-color: #e3e3e3;
}

.discard {
    flex: 1;
    margin-left: 34px;
    color: #b8b8b8;
    font-weight: 400;
}

/* Tour tooltip */
.tour {
    position: absolute;
    top: 369px;
    right: calc(100% + 24px);
    width: 320px;
    padding: 26px 20px 24px 28px;
    border-radius: 3px;
    background-color: #3483fa;
    color: #fff;
    font-size: 14px;
    line-height: 18px;
}

.tour::after {
    content: "";
    position: absolute;
    left: 100%;
    top: 92px;
    border: 16px solid transparent;
    border-left-color: #3483fa;
    border-right: none;
}

.tour h4 {
    margin-bottom: 30px;
    font-size: 16px;
    font-weight: 700;
    line-height: 21px;
}

.tour p {
    font-weight: 600;
}

.tour-nav {
    display: flex;
    align-items: center;
    margin-top: 36px;
    height: 26px;
    padding-right: 22px;
}

.tour-nav span {
    margin-right: auto;
    font-size: 13px;
    font-weight: 600;
}

.tour-nav button {
    margin-left: 48px;
    font-size: 12px;
    font-weight: 600;
}

/* Windows task bar */
.taskbar {
    height: 40px;
    display: flex;
    background-color: #454545;
    color: #fff;
}

.taskbar button {
    width: 49px;
}

.taskbar button svg {
    width: 23px;
    height: 24px;
}

.taskbar .start {
    width: 48px;
}

.taskbar .start svg,
.taskbar .t16 {
    width: 16px;
    height: 16px;
}

.taskbar button .t16 {
    width: 18px;
    height: 18px;
}

.search {
    width: 344px;
    display: flex;
    align-items: center;
    border: 1px solid #6a6a6a;
    background-color: #333;
    padding-left: 11px;
}

.lens {
    width: 17px;
    height: 17px;
    margin-right: 11px;
}

.search input {
    flex: 1;
    min-width: 0;
    border: none;
    outline: none;
    background: none;
    color: #fff;
    font-family: inherit;
    font-size: 14px;
}

.search input::placeholder {
    color: #dedede;
}

.temple {
    width: 78px;
    height: 38px;
    stroke: none;
}

.taskbar .running {
    background-color: #6d6d6d;
    border-bottom: 2px solid #76b9ed;
}

.tray {
    margin-left: auto;
    display: flex;
    align-items: center;
    gap: 8px;
    padding-right: 3px;
}

.cloud {
    width: 24px;
    height: 20px;
}

.weather {
    font-size: 14px;
    margin-right: 6px;
}

.t12 {
    width: 14px;
    height: 14px;
}

.tray time {
    font-size: 11px;
    line-height: 18px;
    text-align: center;
}

.alerts {
    position: relative;
    width: 49px;
    height: 40px;
    padding: 11px 0 0 11px;
    border-right: 1px solid #777;
}

.alerts svg {
    width: 16px;
    height: 16px;
}

.lines {
    stroke: #454545;
}

.alerts b {
    position: absolute;
    left: 18px;
    top: 19px;
    width: 17px;
    height: 17px;
    border: 1px solid #999;
    border-radius: 50%;
    background-color: #454545;
    font-size: 11px;
    line-height: 15px;
    text-align: center;
}
```
